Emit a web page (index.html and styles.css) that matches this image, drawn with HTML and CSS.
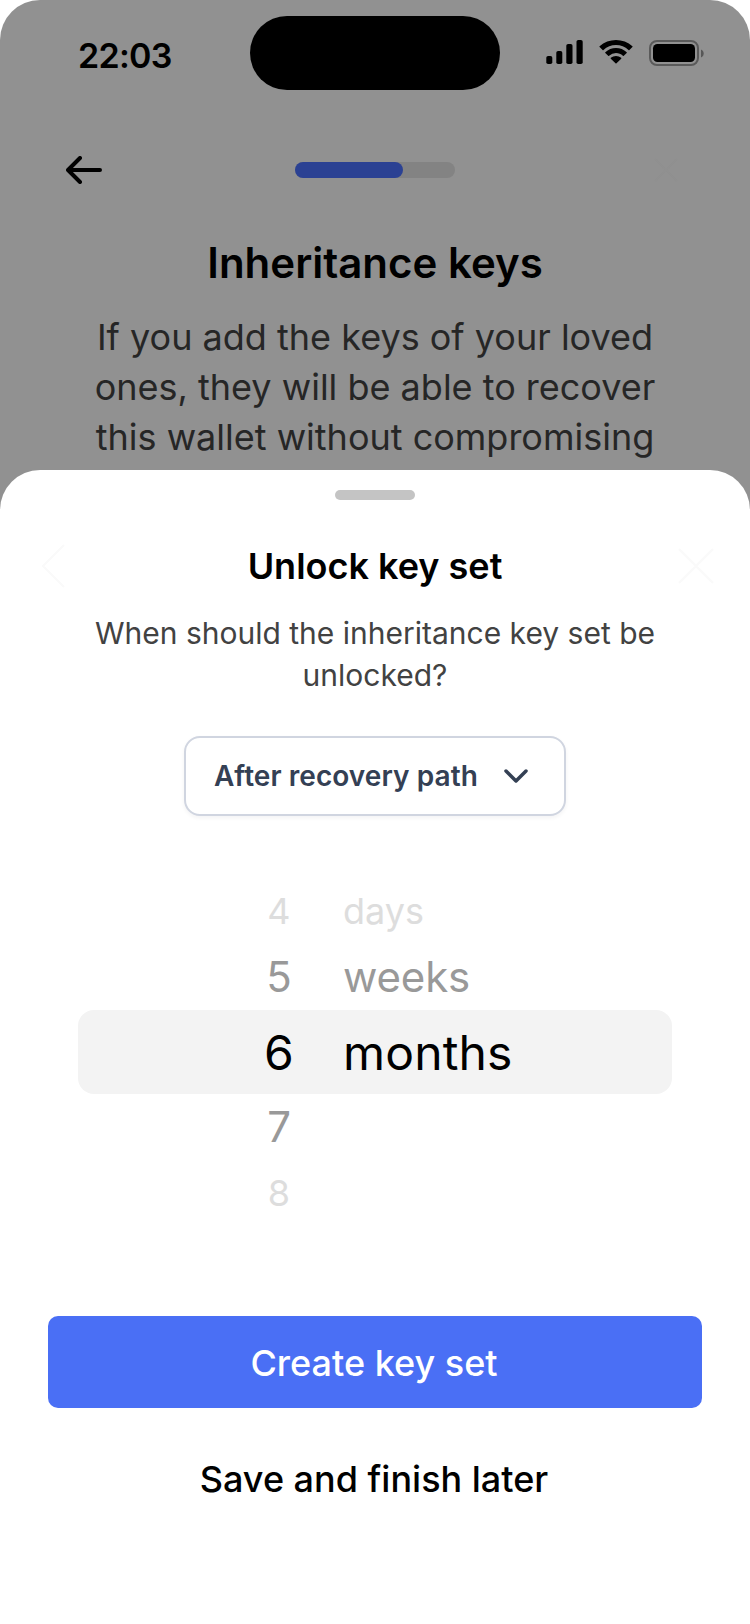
FILE: index.html
```html
<!DOCTYPE html>
<html lang="en">
<head>
<meta charset="utf-8">
<title>Inheritance keys</title>
<link rel="stylesheet" href="styles.css">
</head>
<body>
<div class="screen">
  <header class="status">
    <span class="status-time">22:03</span>
    <span class="island"></span>
    <span class="status-icons">
      <svg class="icon-signal" width="37" height="24" viewBox="0 0 37 24"><rect x="0.300" y="16" width="6" height="8" rx="1.800"/><rect x="10.300" y="11" width="6" height="13" rx="1.800"/><rect x="20.300" y="4" width="6.200" height="20" rx="1.800"/><rect x="30.500" y="0" width="6.200" height="24" rx="1.800"/></svg>
      <svg class="icon-wifi" width="34" height="24" viewBox="0 0 34 24"><path d="M17 5c4.700 0 9.100 1.800 12.500 5 .25.25.65.25.9 0l3-2.900c.25-.25.25-.65 0-.9C24.500-2 9.500-2 .6 6.200c-.25.25-.25.65 0 .9l3 2.900c.25.25.65.25.9 0C7.900 6.800 12.300 5 17 5z"/><path d="M17 13.100c2.600 0 5 .95 6.900 2.700.25.25.65.25.9 0l2.900-2.700c.25-.25.25-.65 0-.9a15.600 15.600 0 0 0-21.400 0c-.25.25-.25.65 0 .9l2.900 2.700c.25.25.65.25.9 0a10.200 10.200 0 0 1 6.900-2.700z"/><path d="M22.200 18.700c.25-.25.25-.7 0-.9a8 8 0 0 0-10.400 0c-.25.2-.25.65 0 .9l4.700 4.600c.3.3.7.3 1 0z"/></svg>
      <svg class="icon-battery" width="55" height="26" viewBox="0 0 55 26"><rect x="1" y="1" width="48" height="24" rx="7" fill="none" stroke="#000" stroke-opacity=".38" stroke-width="2"/><rect x="4" y="4" width="42" height="18" rx="4.500"/><path d="M52 9.500v8c1.700-.7 2.700-2.200 2.700-4s-1-3.300-2.700-4z" fill-opacity=".4"/></svg>
    </span>
  </header>

  <nav class="nav">
    <svg class="back" width="36" height="28" viewBox="0 0 36 28"><path d="M34 14H2.500M14 2L2 14l12 12"/></svg>
    <div class="progress"><div class="progress-fill"></div></div>
    <svg class="nav-close" width="24" height="24" viewBox="0 0 24 24"><path d="M1 1l22 22M23 1L1 23"/></svg>
  </nav>

  <main class="intro">
    <h1 class="title">Inheritance keys</h1>
    <p class="lead">If you add the keys of your loved<br>ones, they will be able to recover<br>this wallet without compromising</p>
  </main>

  <section class="sheet">
    <div class="grabber"></div>
    <div class="sheet-head">
      <svg class="ghost" width="24" height="44" viewBox="0 0 24 44"><path d="M22 1L1 22l21 21"/></svg>
      <h2 class="sheet-title">Unlock key set</h2>
      <svg class="ghost" width="36" height="36" viewBox="0 0 36 36"><path d="M1 1l34 34M35 1L1 35"/></svg>
    </div>
    <p class="sheet-text">When should the inheritance key set be<br>unlocked?</p>
    <button class="select">
      <span>After recovery path</span>
      <svg width="24" height="14" viewBox="0 0 24 14"><path d="M2 2l10 10L22 2"/></svg>
    </button>
    <div class="picker">
      <div class="row far"><span class="num">4</span><span class="unit">days</span></div>
      <div class="row near"><span class="num">5</span><span class="unit">weeks</span></div>
      <div class="row current"><span class="num">6</span><span class="unit">months</span></div>
      <div class="row near"><span class="num">7</span></div>
      <div class="row far"><span class="num">8</span></div>
    </div>
    <button class="primary">Create key set</button>
    <button class="secondary">Save and finish later</button>
  </section>
</div>
</body>
</html>
```
FILE: styles.css
```css
* { box-sizing: border-box; }

body {
  margin: 0;
  background: #fff;
  font-family: Inter, "Liberation Sans", sans-serif;
}

h1, h2, p { margin: 0; }

svg { display: block; flex: none; }

button {
  padding: 0;
  border: 0;
  background: none;
  font-family: inherit;
}

.screen {
  position: relative;
  width: 750px;
  height: 1624px;
  overflow: hidden;
  border-radius: 40px 40px 0 0;
  background: #919191;
}

/* Status bar */
.status {
  display: grid;
  grid-template-columns: 250px 250px 250px;
  height: 112px;
  padding-top: 16px;
}

.status-time {
  padding: 19px 0 0 78px;
  font-size: 34px;
  font-weight: 600;
  line-height: 42px;
  letter-spacing: -.7px;
}

.island {
  height: 74px;
  border-radius: 37px;
  background: #000;
}

.status-icons {
  display: flex;
  align-items: flex-start;
  padding: 24px 0 0 46px;
}

.icon-wifi { margin-left: 15.5px; }
.icon-battery { margin-left: 16.5px; }

/* Navigation */
.nav {
  display: grid;
  grid-template-columns: 1fr 160px 1fr;
  align-items: center;
  height: 116px;
  padding: 0 66px;
}

.back, .select svg {
  fill: none;
  stroke: #000;
  stroke-width: 4;
  stroke-linecap: round;
  stroke-linejoin: round;
}

.progress {
  height: 16px;
  border-radius: 8px;
  background: #838383;
}

.progress-fill {
  width: 108px;
  height: 16px;
  border-radius: 8px;
  background: #2b4193;
}

.nav-close {
  justify-self: end;
  margin-right: 6px;
  fill: none;
  stroke: #909090;
  stroke-width: 2;
}

/* Page copy behind the sheet */
.intro { text-align: center; }

.title {
  padding-top: 10px;
  font-size: 42px;
  font-weight: 600;
  line-height: 50px;
}

.lead {
  padding-top: 24px;
  color: #262626;
  font-size: 36px;
  line-height: 50px;
}

/* Bottom sheet */
.sheet {
  position: absolute;
  inset: 470px 0 0;
  display: flex;
  flex-direction: column;
  align-items: center;
  padding-top: 20px;
  border-radius: 40px 40px 0 0;
  background: #fff;
}

.grabber {
  width: 80px;
  height: 10px;
  border-radius: 5px;
  background: #c4c4c4;
}

.sheet-head {
  display: flex;
  align-items: center;
  justify-content: space-between;
  width: 100%;
  height: 44px;
  margin-top: 44px;
  padding: 0 36px 0 42px;
}

.ghost {
  fill: none;
  stroke: #fafafa;
  stroke-width: 2;
}

.sheet-title {
  padding-left: 6px;
  font-size: 36px;
  font-weight: 600;
  line-height: 44px;
}

.sheet-text {
  margin-top: 24px;
  color: #424242;
  font-size: 30px;
  line-height: 42px;
  text-align: center;
}

.select {
  display: flex;
  align-items: center;
  justify-content: space-between;
  width: 382px;
  height: 80px;
  margin-top: 40px;
  padding: 0 36px 0 28px;
  border: 2px solid #d0d5e0;
  border-radius: 16px;
  background: #fff;
  box-shadow: 0 2px 4px rgba(16, 24, 40, .05);
  color: #344054;
  font-size: 28px;
  font-weight: 600;
  letter-spacing: .06px;
}

.select svg {
  stroke: #344054;
  stroke-width: 3.5;
}

.picker {
  width: 594px;
  margin-top: 62px;
}

.row {
  display: grid;
  grid-template-columns: 60px 300px;
  column-gap: 34px;
  align-items: center;
  padding-left: 171px;
}

.num { text-align: center; }

.far {
  height: 66px;
  color: #ddd;
  font-size: 36px;
}

.near {
  height: 66px;
  padding-bottom: 2px;
  color: #999;
  font-size: 42px;
  letter-spacing: -.15px;
}

.current {
  height: 84px;
  border-radius: 16px;
  background: #f3f3f3;
  color: #000;
  font-size: 48px;
  letter-spacing: .15px;
}

.primary {
  width: 654px;
  height: 92px;
  margin-top: 90px;
  padding: 2px 2px 0 0;
  border-radius: 10px;
  background: #4a6ff5;
  color: #fff;
  font-size: 36px;
  font-weight: 500;
}

.secondary {
  height: 92px;
  margin-top: 25px;
  padding-right: 2px;
  color: #000;
  font-size: 36px;
  font-weight: 500;
}
```
